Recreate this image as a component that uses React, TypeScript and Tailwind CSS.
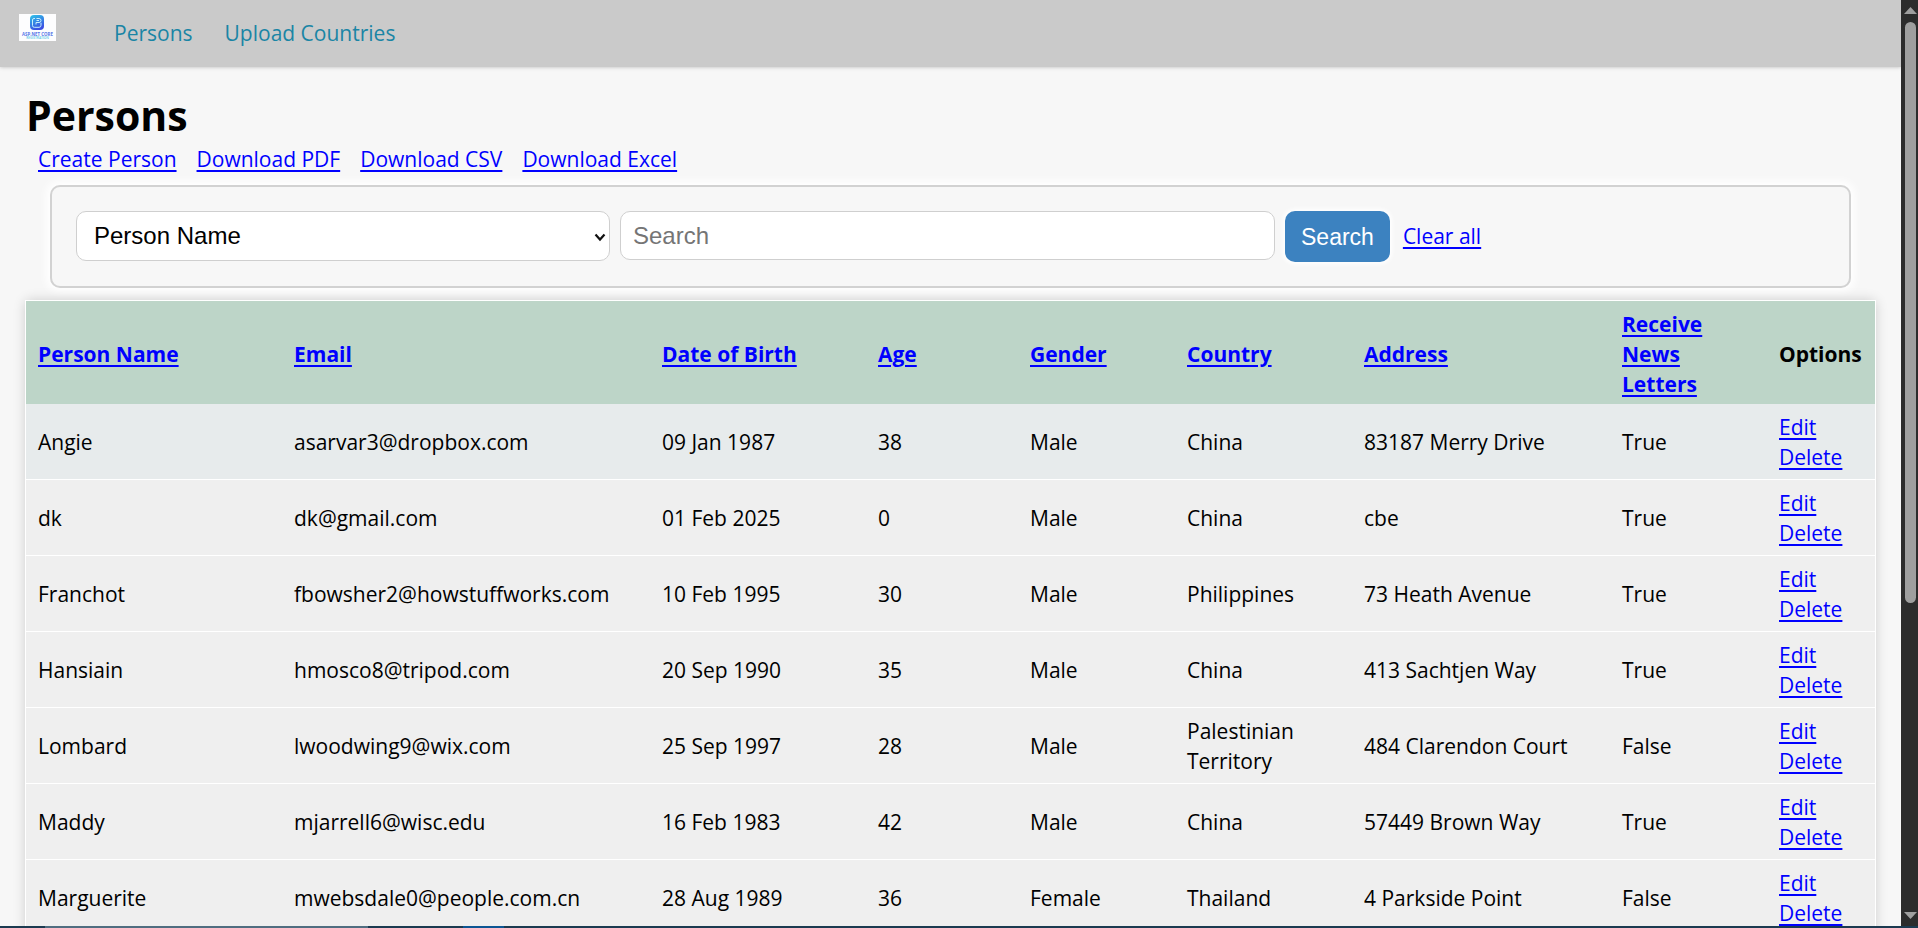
const columns = [
  { label: "Person Name", width: "w-[256px]" },
  { label: "Email", width: "w-[368px]" },
  { label: "Date of Birth", width: "w-[216px]" },
  { label: "Age", width: "w-[152px]" },
  { label: "Gender", width: "w-[157px]" },
  { label: "Country", width: "w-[177px]" },
  { label: "Address", width: "w-[258px]" },
  { label: "Receive News Letters", width: "w-[157px]" },
];

const persons = [
  ["Angie", "asarvar3@dropbox.com", "09 Jan 1987", "38", "Male", "China", "83187 Merry Drive", "True"],
  ["dk", "dk@gmail.com", "01 Feb 2025", "0", "Male", "China", "cbe", "True"],
  ["Franchot", "fbowsher2@howstuffworks.com", "10 Feb 1995", "30", "Male", "Philippines", "73 Heath Avenue", "True"],
  ["Hansiain", "hmosco8@tripod.com", "20 Sep 1990", "35", "Male", "China", "413 Sachtjen Way", "True"],
  ["Lombard", "lwoodwing9@wix.com", "25 Sep 1997", "28", "Male", "Palestinian Territory", "484 Clarendon Court", "False"],
  ["Maddy", "mjarrell6@wisc.edu", "16 Feb 1983", "42", "Male", "China", "57449 Brown Way", "True"],
  ["Marguerite", "mwebsdale0@people.com.cn", "28 Aug 1989", "36", "Female", "Thailand", "4 Parkside Point", "False"],
];

const link = "text-[#0000ff] underline decoration-2 underline-offset-3";

function Logo() {
  return (
    <svg width="37" height="27" viewBox="0 0 37 27" role="img" aria-label="ASP.NET Core">
      <defs>
        <linearGradient id="logo-fill" x1="0" y1="0" x2="0.4" y2="1">
          <stop offset="0" stopColor="#30c6e8" />
          <stop offset="1" stopColor="#3b50e2" />
        </linearGradient>
      </defs>
      <rect width="37" height="27" fill="#fdfdfe" />
      <rect x="11" y="1" width="14" height="15" rx="4" fill="url(#logo-fill)" />
      <path d="M16 4.500h-1q-1.500 0-1.500 1.500v5.500q0 1.800 1.800 1.800h4.700q2 0 2-2v-2.500M17.500 4.500h2.500q2 0 2 2t-2 2h-3v2M17.500 6.500h2.500" fill="none" stroke="#c9f0fb" strokeWidth="1" />
      <text x="18.500" y="21.500" textAnchor="middle" fontSize="4.400" fontWeight="700" fill="#5577e8">ASP.NET CORE</text>
      <text x="18.500" y="25" textAnchor="middle" fontSize="3.200" fontWeight="600" fill="#5cc8e6">REGISTRATION</text>
    </svg>
  );
}

function ScrollBar() {
  return (
    <div aria-hidden="true" className="flex w-[17px] shrink-0 flex-col items-center bg-[#2c2c2c] py-[7px] pl-[2px]">
      <svg width="13" height="7" viewBox="0 0 13 7" className="shrink-0">
        <path d="M6.500 0L13 7H0z" fill="#9f9f9f" />
      </svg>
      <div className="mt-2 flex w-[11px] flex-1 flex-col pb-[10px]">
        <div className="h-[66%] rounded-full bg-[#9f9f9f]" />
      </div>
      <svg width="13" height="7" viewBox="0 0 13 7" className="shrink-0">
        <path d="M0 0H13L6.500 7z" fill="#9f9f9f" />
      </svg>
    </div>
  );
}

export default function App() {
  return (
    <div className="flex h-screen flex-col overflow-hidden bg-[#f7f7f7] font-['Segoe_UI','Open_Sans',sans-serif] text-[21px] leading-[30px] text-black">
      <div className="flex min-h-0 flex-1">
        <div className="min-w-0 flex-1 overflow-hidden">
          <header className="flex h-[67px] items-center bg-[#cacaca] px-[19px] shadow-[0_0_4px_rgba(0,0,0,0.25)]">
            <a href="#home" className="mb-3">
              <Logo />
            </a>
            <nav className="mb-[2px] ml-[58px] flex gap-8 text-[#1a85a5]">
              <a href="#persons">Persons</a>
              <a href="#upload">Upload Countries</a>
            </nav>
          </header>

          <main className="px-[26px] pt-5">
            <h1 className="text-[41px] leading-[57px] font-bold">Persons</h1>
            <div className="ml-3 flex gap-5">
              <a href="#create" className={link}>Create Person</a>
              <a href="#pdf" className={link}>Download PDF</a>
              <a href="#csv" className={link}>Download CSV</a>
              <a href="#excel" className={link}>Download Excel</a>
            </div>

            <form
              onSubmit={(e) => e.preventDefault()}
              className="mx-6 mt-[11px] flex items-start rounded-[10px] border-2 border-[#d2d2d2] p-6 font-['Liberation_Sans',Arial,sans-serif] shadow-[0_0_8px_4px_#ffffff]"
            >
              <div className="relative mr-[10px] w-[534px]">
                <select aria-label="Search by" className="h-[50px] w-full appearance-none rounded-[10px] border border-[#cfcfcf] bg-white px-[17px] text-[24px]">
                  <option>Person Name</option>
                  <option>Email</option>
                  <option>Date of Birth</option>
                </select>
                <svg width="12" height="9" viewBox="0 0 12 9" className="pointer-events-none absolute top-[22px] right-1">
                  <path d="M1.500 1.500L6 6.500L10.500 1.500" fill="none" stroke="#111" strokeWidth="2.200" />
                </svg>
              </div>
              <input type="text" aria-label="Search" placeholder="Search" className="h-[49px] w-[655px] rounded-[10px] border border-[#cfcfcf] bg-white px-3 text-[24px] placeholder:text-[#757575]" />
              <button type="submit" className="ml-[10px] h-[51px] rounded-[10px] bg-[#3c82c0] px-4 text-[23px] text-white shadow-[0_0_4px_2px_#ffffff]">
                Search
              </button>
              <a href="#clear" className="mt-[10px] ml-[13px] font-['Segoe_UI','Open_Sans',sans-serif] text-[#0000ff] underline decoration-2 underline-offset-3">
                Clear all
              </a>
            </form>

            <table className="mt-[13px] w-full table-fixed border-collapse bg-[#efefef] text-left shadow-[0_0_0_1px_#ffffff,0_0_12px_rgba(0,0,0,0.2)]">
              <thead className="bg-[#bdd5c8]">
                <tr>
                  {columns.map((c) => (
                    <th key={c.label} className={`${c.width} pt-2 pr-5 pb-[5px] pl-3 font-bold`}>
                      <a href="#sort" className={link}>{c.label}</a>
                    </th>
                  ))}
                  <th className="w-[108px] pt-2 pb-[5px] pl-3 font-bold">Options</th>
                </tr>
              </thead>
              <tbody>
                {persons.map((p) => (
                  <tr key={p[1]} className="border-b border-white first:bg-[#e7ebec]">
                    {p.map((v, i) => (
                      <td key={i} className="pt-2 pb-[7px] pl-3">{v}</td>
                    ))}
                    <td className="pt-2 pb-[7px] pl-3">
                      <a href="#edit" className={link}>Edit</a>
                      <br />
                      <a href="#delete" className={link}>Delete</a>
                    </td>
                  </tr>
                ))}
              </tbody>
            </table>
          </main>
        </div>
        <ScrollBar />
      </div>
      <div aria-hidden="true" className="flex h-[2px] shrink-0 bg-[#1b3a50]">
        <div className="ml-[45px] w-[323px] bg-[#506d80]" />
        <div className="ml-[95px] w-[41px] bg-[#0c5593]" />
      </div>
    </div>
  );
}
